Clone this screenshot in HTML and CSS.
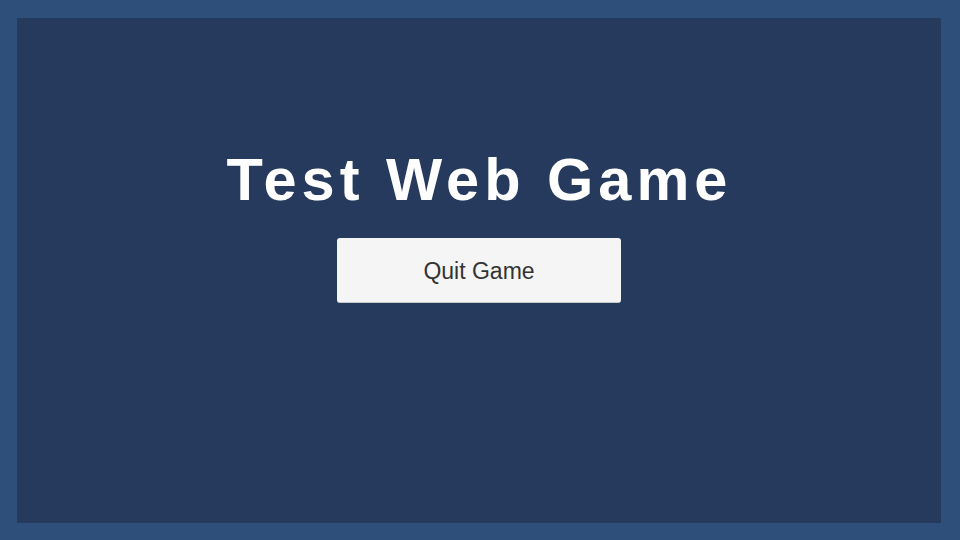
FILE: index.html
```html
<!DOCTYPE html>
<html>
<head>
<meta charset="utf-8">
<link rel="stylesheet" href="styles.css">
</head>
<body>
<div class="frame">
  <main class="stage">
    <h1 class="title">Test Web Game</h1>
    <button class="btn">Quit Game</button>
  </main>
</div>
</body>
</html>
```
FILE: styles.css
```css
html, body {
  margin: 0;
  height: 100%;
}
body {
  background: #2f4f7b;
  font-family: "Liberation Sans", Arial, sans-serif;
}
.frame {
  box-sizing: border-box;
  height: 540px;
  width: 960px;
  padding: 18px 19px 17px 17px;
}
.stage {
  box-sizing: border-box;
  height: 100%;
  background: #263a5e;
  display: flex;
  flex-direction: column;
  align-items: center;
  padding-top: 132px;
}
.title {
  margin: 0;
  color: #ffffff;
  font-size: 59.5px;
  line-height: 1;
  font-weight: bold;
  letter-spacing: 5px;
  padding-left: 1px;
}
.btn {
  margin-top: 28px;
  width: 284px;
  height: 65px;
  background: #f5f5f5;
  border: none;
  border-bottom: 1px solid #c8c8c8;
  border-radius: 3px;
  color: #333333;
  font-family: "Liberation Sans", Arial, sans-serif;
  font-size: 23px;
  padding: 3px 0 0 0;
}
```
